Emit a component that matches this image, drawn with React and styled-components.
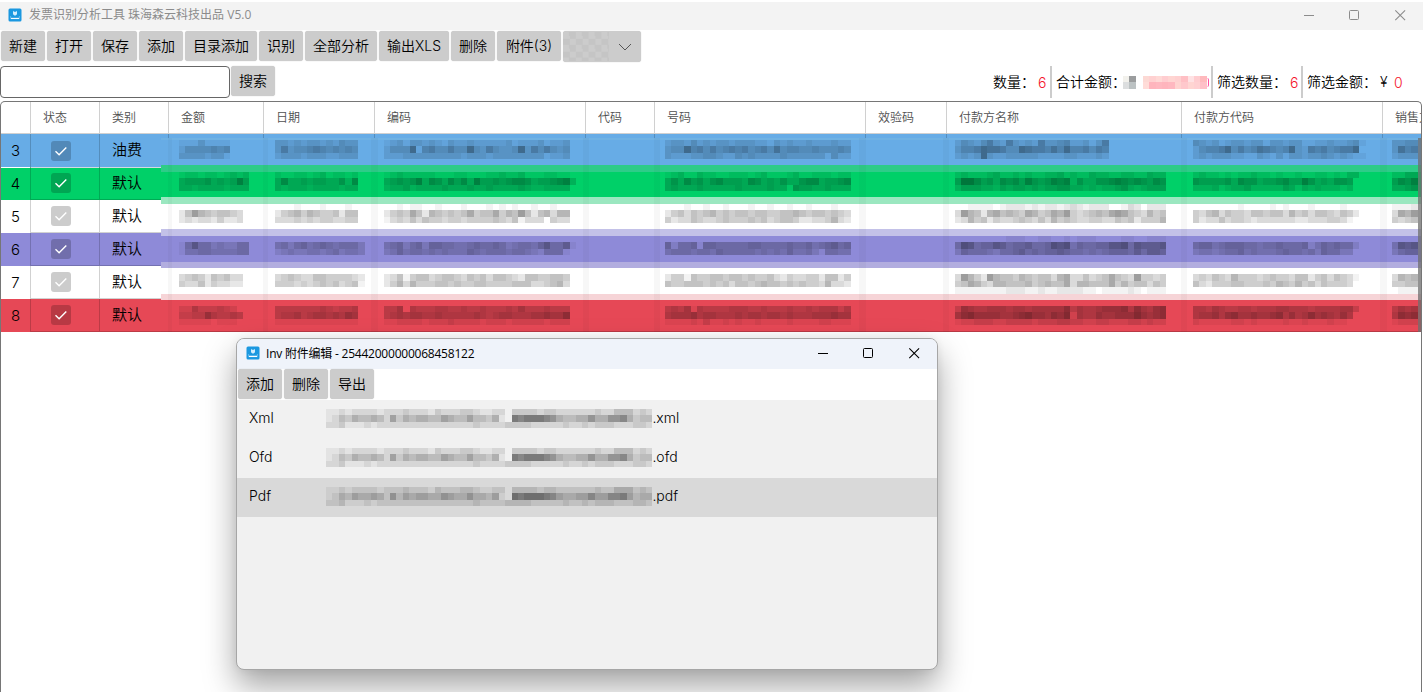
import React from 'react';
import styled, { createGlobalStyle } from 'styled-components';

const CELL = 6.4;

const GlobalStyle = createGlobalStyle`
    * {
        box-sizing: border-box;
    }
    body {
        margin: 0;
        background: #fff;
        color: #000;
        overflow: hidden;
        font-family: Inter, "Noto Sans CJK SC", sans-serif;
        font-size: 14px;
        font-weight: 350;
    }
`;

const Page = styled.div`
    position: relative;
    display: flex;
    flex-direction: column;
    width: 1424px;
    height: 692px;
    padding-top: 2px;
    overflow: hidden;
`;

const TitleBar = styled.div`
    display: flex;
    align-items: center;
    flex: none;
    height: ${p => p.$height}px;
    margin-right: ${p => p.$cut || 0}px;
    padding: 0 0 2px ${p => p.$left}px;
    background: ${p => p.$bg};
    color: ${p => p.$color};
    font-family: "Open Sans", "Noto Sans CJK SC", sans-serif;
    font-size: 12px;
    font-weight: 400;
    letter-spacing: ${p => p.$spacing || 0}px;

    > svg {
        flex: none;
        margin-right: ${p => p.$gap || 7}px;
    }
`;

const TitleText = styled.div`
    flex: 1;
    padding-top: ${p => p.$drop || 0}px;
    white-space: nowrap;
    line-height: 18px;
`;

const WinControls = styled.div`
    display: flex;
    height: 100%;
    align-items: center;

    svg {
        width: 46px;
        height: 24px;
        margin-left: -0.4px;
    }
`;

const ToolBar = styled.div`
    display: flex;
    gap: 2px;
    flex: none;
    height: ${p => p.$height}px;
    padding: 1px 0 0 1px;
`;

const Button = styled.button`
    width: ${p => p.$width || 44}px;
    height: 30px;
    padding: 0 0 2px;
    border: 0;
    border-radius: 3px;
    background: #cccccc;
    box-shadow: 0 0 1px #bbb;
    color: #000;
    font: inherit;
    white-space: nowrap;
`;

const Combo = styled.div`
    display: flex;
    align-items: center;
    width: 78px;
    height: 31px;
    border-radius: 3px;
    background: #cccccc;
    box-shadow: 0 0 1px #bbb;
`;

const Checker = styled.div`
    width: 46px;
    height: 29px;
    margin-right: 8px;
    background: repeating-conic-gradient(#c5c5c5 0 25%, #cccccc 0 50%) 0 0 / 12.8px 12.8px;
`;

const SearchBar = styled.div`
    display: flex;
    align-items: flex-start;
    gap: 1px;
    flex: none;
    height: 35px;
    padding-right: 23px;
`;

const SearchInput = styled.input`
    width: 230px;
    height: 32px;
    border: 1px solid #666;
    border-radius: 4px;
    outline: none;
`;

const Stats = styled.div`
    display: flex;
    align-items: center;
    height: 32px;
    margin-left: auto;
`;

const Stat = styled.div`
    display: flex;
    align-items: center;
    width: ${p => p.$width}px;
    height: 32px;
    padding-left: ${p => (p.$first ? 0 : 4)}px;
    border-left: ${p => (p.$first ? 0 : 2)}px solid #cccccc;
    white-space: nowrap;
`;

const StatLabel = styled.span`
    flex: none;
    width: ${p => p.$width}px;
    padding-bottom: 2px;
`;

const Red = styled.span`
    color: #f5132c;
`;

const Hidden = styled.div`
    display: grid;
    grid-template-columns: repeat(${p => p.$cols}, ${CELL}px);
    grid-auto-rows: 6.5px;
    margin-right: ${p => p.$gap}px;
`;

const Swatch = styled.i`
    background: ${p => p.$color};
`;

const Tail = styled.i`
    width: 2px;
    height: 9px;
    border-radius: 0 3px 3px 0;
    border-right: 1px solid #ff4fa0;
`;

const Table = styled.div`
    display: flex;
    flex-direction: column;
    flex: 1;
    width: 1422px;
    border: 1px solid #767676;
    border-bottom: 0;
    border-radius: 5px 5px 0 0;
    overflow: hidden;
`;

const HeadRow = styled.div`
    display: grid;
    grid-template-columns: 30px 69px 69px 95px 111px 211px 69px 211px 81px 235px 201px 60px;
    flex: none;
    height: 32px;
    border-bottom: 1px solid #d0d0d0;
`;

const HeadCell = styled.div`
    padding-left: 12px;
    border-right: 1px solid #d0d0d0;
    color: #505050;
    font-size: 12px;
    line-height: 32px;
    white-space: nowrap;
`;

const Body = styled.div`
    display: flex;
    position: relative;
    flex: none;
    height: 198px;
`;

const LeftPane = styled.div`
    width: 160px;
`;

const Row = styled.div`
    display: grid;
    grid-template-columns: 30px 69px 61px;
    height: 33px;
    background: ${p => p.$bg};
    font-size: 15px;
`;

const NumCell = styled.div`
    padding-top: 1px;
    border-right: 1px solid rgba(0, 0, 0, 0.18);
    border-bottom: ${p => (p.$line ? '1px solid #fff' : 0)};
    line-height: 32px;
    text-align: center;
`;

const Cell = styled.div`
    display: flex;
    align-items: center;
    padding-left: ${p => p.$left}px;
    padding-bottom: ${p => p.$lift || 0}px;
    border-right: ${p => (p.$last ? 0 : '1px solid rgba(0, 0, 0, 0.18)')};
    border-bottom: 1px solid ${p => p.$line || 'rgba(0, 0, 0, 0.18)'};
`;

const Check = styled.span`
    display: flex;
    width: 20px;
    height: 20px;
    border-radius: 3px;
    background: rgba(0, 0, 0, 0.2);
`;

const RightPane = styled.div`
    flex: 1;
    overflow: hidden;
`;

const Band = styled.div`
    display: grid;
    grid-template-columns: 96px 109.2px 281.2px 289.6px 238px 199px 40px;
    height: ${p => p.$height}px;
    padding: 0 0 0 18px;
    padding-top: ${p => p.$top || 0}px;
    background: ${p => p.$stripes}, ${p => p.$bg};
    box-shadow: ${p => (p.$end ? 'inset 0 -1px rgba(0, 0, 0, 0.2)' : 'none')};
`;

const ScrollBar = styled.div`
    position: absolute;
    top: 4px;
    right: 0;
    width: 3px;
    height: 194px;
    background: rgba(110, 110, 110, 0.75);
`;

const Dialog = styled.div`
    position: absolute;
    left: 236px;
    top: 338px;
    display: flex;
    flex-direction: column;
    width: 702px;
    height: 332px;
    border: 1px solid #a6a6a6;
    border-radius: 8px;
    background: #f1f1f1;
    box-shadow: 0 16px 32px rgba(0, 0, 0, 0.36), 0 0 8px rgba(0, 0, 0, 0.06);
    overflow: hidden;
`;

const DialogTools = styled(ToolBar)`
    background: #fff;
    padding-top: 0;
`;

const FileRow = styled.div`
    display: flex;
    align-items: center;
    height: 39px;
    padding-left: 12px;
    background: ${p => (p.$active ? '#d9d9d9' : 'transparent')};
`;

const FileType = styled.div`
    width: 77px;
    padding-bottom: 4px;
`;

const FileExt = styled.div`
    padding-bottom: 4px;
`;

const FileName = styled.div`
    height: 19.2px;
    margin-bottom: 2px;
`;

// shade strings: one digit per block, 0 leaves the block empty
const columns = [
    {
        rows: [
            ['11131111', '24444545', '33332331'],
            ['12212212323', '45556454585', '44344443444'],
            ['0000000000', '2586545543', '2323324223'],
            ['00000000000', '15855343355', '14455444455'],
            ['0000000000', '3454254533', '4335243322'],
            ['22533343200', '3344754454', '1111101110'],
        ],
    },
    {
        rows: [
            ['3323233232433', '3634456545454', '2333233322333'],
            ['2112212312212', '4744545544637', '4344434444344'],
            ['0001000100010', '2456465445255', '3334343443344'],
            ['00000000000000', '45356456545553', '23433443453443'],
            ['00000000000000', '34543355444432', '44434345453451'],
            ['4444444543445', '4556456656576', '1111111111111'],
        ],
    },
    {
        rows: [
            ['12313323213223222223122231223', '24448156446448436433483646434', '22233333333323332333333331223'],
            ['12322222111221112232231112211', '456568476475748556567764556783', '34453444454445445444454334444'],
            ['00101100100010001010100100100', '24547526545457455746585256366', '13435354434434444543513330433'],
            ['00000000000000000000000000000', '456356366554456556534554685571', '34645545454446545554554325551'],
            ['00000000000000000000000000000', '23514553455435453554325544554', '24636444554544554444555334563'],
            ['44605444554454454445464445444', '45656655655555654566555667668', '11222212223222212221222221222'],
        ],
    },
    {
        rows: [
            ['23324232332333221323223222322', '34485646456564564745544544454', '32223344322434333343333331422'],
            ['12311322112221231112311222122', '46475646755547645464467745567', '45444544444544445441655445444'],
            ['00010010010001001001001000100', '24535456454554554455654554543', '42335433454445453455422334632'],
            ['00000000000000000000000000000', '62556166555556655556556456756', '45554554655555454546445315544'],
            ['00000000000000000000000000000', '24415445545545445324334425524', '54455545453554565545454436332'],
            ['45461544445554454445445455535', '56667566555656656656555666766', '11112131121211211112111122111'],
        ],
    },
    {
        rows: [
            ['243246326323263345223136', '355687764487665758556465', '232383223333322223322232'],
            ['232223422323223342322433223322433', '599756476758656878364466787676576', '355544354554545566443434456434555'],
            ['001111012221212212321222001320222', '386526756547645768434565787543645', '236452433454353645433443354524446'],
            ['000000001110011001011100001100111', '598566875667556989465566889587778', '365554355675656676554545666575776'],
            ['0', '386428655465455367335345754384434', '457643665556456557366555746455354', '111111112221121122221101111210111'],
            ['376556665665666668465567778586578', '689777766789776879265576677797678', '122333223333233344332233222332322'],
        ],
    },
    {
        rows: [
            ['432312332331332331122322341', '245568464576545832656456680', '232333221132131332334323211'],
            ['23221212232212112112212133', '6555564766455675586454665', '3334234453333354243433323'],
            ['00000001000010100010000100', '43563544355455364535543542', '4233534432333333223334431'],
            ['00000000000000000000000000', '56645666554556555624656552', '3443455645444565545365533'],
            ['00000000000000000000000000', '34354364443454435524535431', '5324445544454654645354443'],
            ['55465445545556655545555663', '5667578667667857568676575', '2111112212111121121112110'],
        ],
    },
    {
        rows: [
            ['3344', '3756', '2333'],
            ['2244', '5768', '4456'],
            ['1112', '3768', '4345'],
            ['0000', '4878', '3566'],
            ['0000', '3656', '4455', '0111'],
            ['4656', '5878', '1222'],
        ],
    },
];

const heads = ['', '状态', '类别', '金额', '日期', '编码', '代码', '号码', '效验码', '付款方名称', '付款方代码', '销售方'];

const invoices = [
    { no: 3, kind: '油费', bg: '#67ace6', line: '#d3dae0' },
    { no: 4, kind: '默认', bg: '#00d068' },
    { no: 5, kind: '默认', bg: '#ffffff' },
    { no: 6, kind: '默认', bg: '#8e8ad8' },
    { no: 7, kind: '默认', bg: '#ffffff' },
    { no: 8, kind: '默认', bg: '#e64856' },
];

const bands = [
    { bg: '#67ace6', height: 4, lines: true },
    { bg: '#70b2e3', height: 2 },
    { bg: '#67ace6', height: 25, row: 0 },
    { bg: '#2ecc88', height: 7 },
    { bg: '#00d068', height: 25, row: 1 },
    { bg: '#9be7c0', height: 7 },
    { bg: '#ffffff', height: 25, row: 2 },
    { bg: '#c3c1e8', height: 7 },
    { bg: '#8e8ad8', height: 26, row: 3 },
    { bg: '#b2addf', height: 6 },
    { bg: '#ffffff', height: 26, row: 4 },
    { bg: '#f6d4d7', height: 6 },
    { bg: '#e64856', height: 32, top: 6, row: 5, end: true },
];

// column separators of the right pane, [left, width]: soft ones and crisp ones
const softMarks = [[7, 4], [102, 5], [210, 7], [422, 6], [493, 6], [698, 7], [782, 6], [1020, 6], [1219, 7]];
const crispMarks = [7, 102, 213, 424, 493, 704, 785, 1020, 1221].map(x => [x, 1]);

const toStripes = (marks, alpha) => marks
    .map(([x, w]) => `linear-gradient(rgba(0,0,0,${alpha}), rgba(0,0,0,${alpha})) ${x}px 0 / ${w}px 100% no-repeat`)
    .join(', ');

const softStripes = toStripes(softMarks, 0.03);
const crispStripes = toStripes(crispMarks, 0.18);

const files = [
    { type: 'Xml', ext: '.xml' },
    { type: 'Ofd', ext: '.ofd' },
    { type: 'Pdf', ext: '.pdf', active: true },
];

const fileShades = [
    '112122221222322213222332112203333233222222322444232',
    '124354454263545544654464435109899987544557557785344',
    '223111212222222222222223222233332222232232333222332',
];

const money = ['#fcd9d4', '#ffd1d1', '#ffd9d6', '#ffcdd0', '#ffd5d2', '#ffd0d0', '#ffbfc4', '#ffe2e4', '#ffcdd0', '#ffb9bd',
    '#ffdcd8', '#ffb5bd', '#ffb8c0', '#ffb5bd', '#ffb8c0', '#ffd3d0', '#ffc8cc', '#ffd5d2', '#ffd0d2', '#ffc0c8'];

function Mosaic({ lines, step = 0.048 }) {
    const width = Math.max(...lines.map(l => l.length)) * CELL;
    return (
        <svg width={width} height={CELL * lines.length} shapeRendering="crispEdges" display="block">
            {lines.map((line, y) => line.split('').map((d, x) => (
                d === '0' ? null :
                <rect key={`${x}-${y}`} x={x * CELL} y={y * CELL} width={CELL} height={CELL} fillOpacity={d * step} />
            )))}
        </svg>
    );
}

function Logo() {
    return (
        <svg width="14" height="14" viewBox="0 0 14 14">
            <rect x="0.5" y="0.5" width="13" height="13" rx="1.5" fill="#1b98e0" />
            <path d="M5 2.8l1 1h2l1-1v3.4L7.6 7.4H6.4L5 6.2z" fill="#d3edfd" />
            <path d="M2.6 8v2.7h8.8V8" fill="none" stroke="#7cc6f2" strokeWidth="0.7" />
            <path d="M3 10.4h8" stroke="#fff" strokeWidth="1.1" />
        </svg>
    );
}

function Controls({ color }) {
    const line = { fill: 'none', stroke: color, strokeWidth: 1 };
    return (
        <WinControls>
            <svg viewBox="0 0 46 24"><path d="M18 12.5h10" {...line} /></svg>
            <svg viewBox="0 0 46 24"><rect x="18.5" y="7.5" width="9" height="9" rx="1" {...line} /></svg>
            <svg viewBox="0 0 46 24"><path d="M18.3 7.3l9.8 9.8M28.1 7.3l-9.8 9.8" {...line} strokeWidth="1.1" /></svg>
        </WinControls>
    );
}

function AttachmentDialog() {
    return (
        <Dialog>
            <TitleBar $height={30} $left={9} $gap={6} $bg="#eff3fa" $color="#000" $spacing={-0.22}>
                <Logo />
                <TitleText $drop={2}>Inv 附件编辑 - 25442000000068458122</TitleText>
                <Controls color="#000" />
            </TitleBar>
            <DialogTools $height={31}>
                <Button>添加</Button>
                <Button>删除</Button>
                <Button>导出</Button>
            </DialogTools>
            {files.map(f => (
                <FileRow key={f.type} $active={f.active}>
                    <FileType>{f.type}</FileType>
                    <FileName><Mosaic lines={fileShades} step={0.055} /></FileName>
                    <FileExt>{f.ext}</FileExt>
                </FileRow>
            ))}
        </Dialog>
    );
}

function App() {
    return (
        <Page>
            <GlobalStyle />
            <TitleBar $height={28} $left={8} $cut={1} $bg="#f3f3f3" $color="#8c8c8c">
                <Logo />
                <TitleText>发票识别分析工具 珠海森云科技出品 V5.0</TitleText>
                <Controls color="#8c8c8c" />
            </TitleBar>

            <ToolBar $height={36}>
                <Button>新建</Button>
                <Button>打开</Button>
                <Button>保存</Button>
                <Button>添加</Button>
                <Button $width={72}>目录添加</Button>
                <Button>识别</Button>
                <Button $width={72}>全部分析</Button>
                <Button $width={70}>输出XLS</Button>
                <Button>删除</Button>
                <Button $width={64}>附件(3)</Button>
                <Combo>
                    <Checker />
                    <svg width="16" height="16" viewBox="0 0 16 16">
                        <path d="M2 5l6 6 6-6" fill="none" stroke="#555" strokeWidth="1" />
                    </svg>
                </Combo>
            </ToolBar>

            <SearchBar>
                <SearchInput />
                <Button>搜索</Button>
                <Stats>
                    <Stat $first $width={57}>
                        <StatLabel $width={45}>数量：</StatLabel>
                        <Red>6</Red>
                    </Stat>
                    <Stat $width={161}>
                        <StatLabel $width={67}>合计金额：</StatLabel>
                        <Hidden $cols={2} $gap={7}>
                            {['#f2f1ec', '#9b9d9e', '#dcdedf', '#bcc2c3'].map(c => <Swatch key={c} $color={c} />)}
                        </Hidden>
                        <Hidden $cols={10} $gap={0}>
                            {money.map((c, i) => <Swatch key={i} $color={c} />)}
                        </Hidden>
                        <Tail />
                    </Stat>
                    <Stat $width={90}>
                        <StatLabel $width={73}>筛选数量：</StatLabel>
                        <Red>6</Red>
                    </Stat>
                    <Stat $width={100}>
                        <StatLabel $width={73}>筛选金额：</StatLabel>
                        <StatLabel $width={14}>¥</StatLabel>
                        <Red>0</Red>
                    </Stat>
                </Stats>
            </SearchBar>

            <Table>
                <HeadRow>
                    {heads.map((h, i) => <HeadCell key={i}>{h}</HeadCell>)}
                </HeadRow>
                <Body>
                    <LeftPane>
                        {invoices.map(inv => (
                            <Row key={inv.no} $bg={inv.bg}>
                                <NumCell $line={inv.line}>{inv.no}</NumCell>
                                <Cell $left={20} $line={inv.line}>
                                    <Check>
                                        <svg width="20" height="20" viewBox="0 0 20 20">
                                            <path d="M4.5 10.3l3.6 3.5 7.2-7.2" fill="none" stroke="#fff" strokeWidth="1.4" />
                                        </svg>
                                    </Check>
                                </Cell>
                                <Cell $left={12} $lift={4} $last $line={inv.line}>{inv.kind}</Cell>
                            </Row>
                        ))}
                    </LeftPane>
                    <RightPane>
                        {bands.map((b, i) => (
                            <Band
                                key={i}
                                $bg={b.bg}
                                $height={b.height}
                                $top={b.top}
                                $end={b.end}
                                $stripes={b.lines ? crispStripes : softStripes}
                            >
                                {b.row !== undefined && columns.map((c, n) => (
                                    <Mosaic key={n} lines={c.rows[b.row]} />
                                ))}
                            </Band>
                        ))}
                    </RightPane>
                    <ScrollBar />
                </Body>
            </Table>

            <AttachmentDialog />
        </Page>
    );
}

export default App;
